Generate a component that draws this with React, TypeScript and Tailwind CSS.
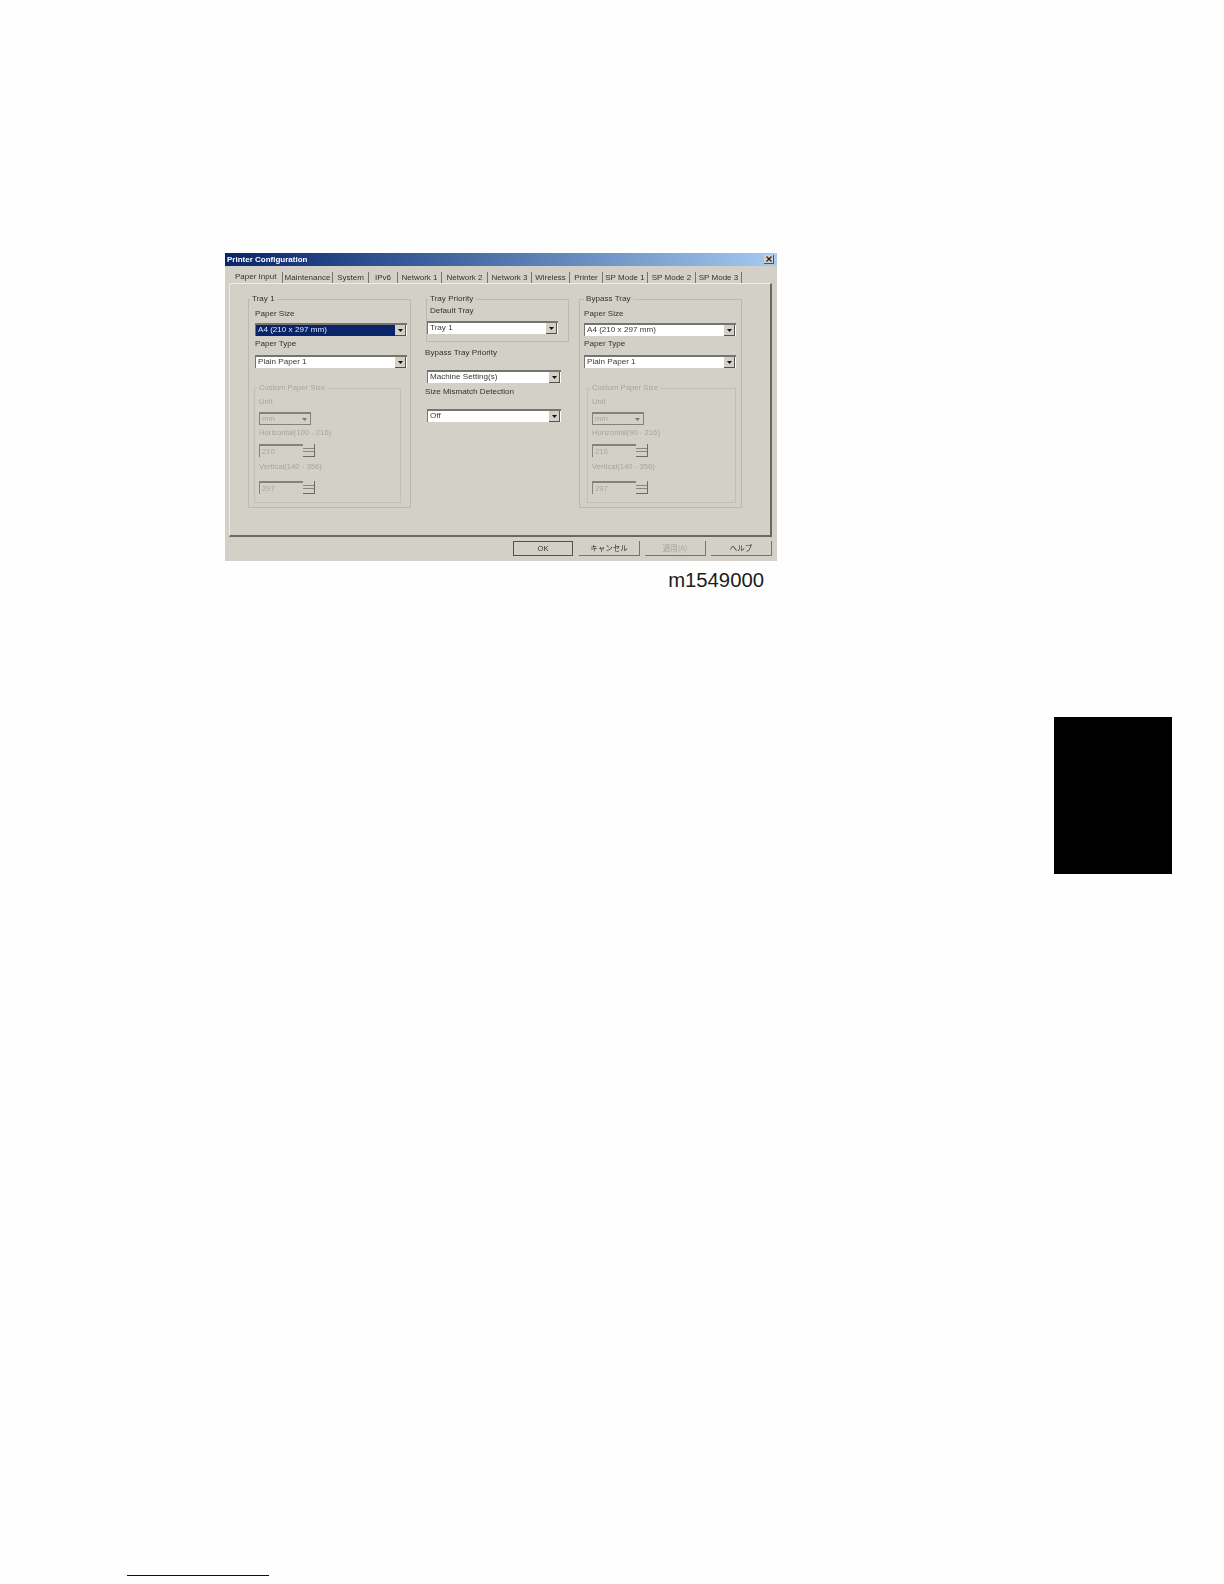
const tabs = [
  { label: 'Maintenance', w: 'w-[50px]' },
  { label: 'System', w: 'w-[36px]' },
  { label: 'IPv6', w: 'w-[29px]' },
  { label: 'Network 1', w: 'w-[44px]' },
  { label: 'Network 2', w: 'w-[46px]' },
  { label: 'Network 3', w: 'w-[44px]' },
  { label: 'Wireless', w: 'w-[38px]' },
  { label: 'Printer', w: 'w-[33px]' },
  { label: 'SP Mode 1', w: 'w-[45px]' },
  { label: 'SP Mode 2', w: 'w-[48px]' },
  { label: 'SP Mode 3', w: 'w-[46px]' },
]

function Arrow() {
  return (
    <span className="flex h-full w-[11px] shrink-0 items-center justify-center border-r border-b border-[#55524d] bg-[#d4d0c8]">
      <svg width="5" height="3" viewBox="0 0 5 3">
        <polygon points="0,0 5,0 2.5,3" fill="#111" />
      </svg>
    </span>
  )
}

function Combo({ text, className, selected }: { text: string; className: string; selected?: boolean }) {
  return (
    <div className={`flex h-[13px] items-center border-t-2 border-l border-[#77746e] bg-white pr-px ${className}`}>
      <span
        className={`flex h-full flex-1 items-center pl-[2px] leading-none ${
          selected ? 'bg-[#0a246a] text-[#e4e8f4]' : 'text-[#3a3a3a]'
        }`}
      >
        {text}
      </span>
      <Arrow />
    </div>
  )
}

function DisabledCombo({ text }: { text: string }) {
  return (
    <div className="ml-[4px] mt-[5px] flex h-[13px] w-[52px] items-center border-t-2 border-l border-r border-b border-[#85827b] pr-px text-[#a8a59e]">
      <span className="flex-1 pl-[2px] leading-none">{text}</span>
      <span className="flex h-full w-[10px] items-center justify-center bg-[#d4d0c8]">
        <svg width="5" height="3" viewBox="0 0 5 3">
          <polygon points="0,0 5,0 2.5,3" fill="#777" />
        </svg>
      </span>
    </div>
  )
}

function Spin({ text, className }: { text: string; className: string }) {
  return (
    <div className={`ml-[4px] flex h-[13px] text-[#a8a59e] ${className}`}>
      <div className="flex w-[44px] items-center border-t-2 border-l border-[#85827b] pl-[2px] leading-none">{text}</div>
      <div className="flex w-[12px] flex-col justify-center gap-[2px] border-r border-b border-[#6d6a64]">
        <div className="h-px w-full bg-[#8a8780]" />
        <div className="h-px w-full bg-[#8a8780]" />
      </div>
    </div>
  )
}

function Label({ text, className }: { text: string; className?: string }) {
  return <div className={`h-[10px] leading-[10px] whitespace-nowrap ${className ?? ''}`}>{text}</div>
}

function CustomSize({ hor, ver, className }: { hor: string; ver: string; className: string }) {
  return (
    <fieldset className={`h-[120px] border border-[#c2bfb7] text-[7.7px] ${className}`}>
      <legend className="ml-[2px] h-[10px] px-[2px] leading-[10px] text-[#a8a59e]">Custom Paper Size</legend>
      <Label text="Unit" className="ml-[4px] mt-[4px] text-[#a8a59e]" />
      <DisabledCombo text="mm" />
      <Label text={hor} className="ml-[4px] mt-[3px] text-[#a8a59e]" />
      <Spin text="210" className="mt-[6px]" />
      <Label text={ver} className="ml-[4px] mt-[5px] text-[#a8a59e]" />
      <Spin text="297" className="mt-[9px]" />
    </fieldset>
  )
}

function TrayGroup({ title, className, legendClass, hor, ver, selected, comboClass, customClass }: {
  title: string
  className: string
  legendClass: string
  hor: string
  ver: string
  selected?: boolean
  comboClass: string
  customClass: string
}) {
  return (
    <fieldset className={`h-[214px] w-[163px] shrink-0 border border-[#bcb9b1] ${className}`}>
      <legend className={`h-[10px] px-[2px] leading-[10px] ${legendClass}`}>{title}</legend>
      <Label text="Paper Size" className="mt-[5px]" />
      <Combo text="A4 (210 x 297 mm)" selected={selected} className={`mt-[4px] ${comboClass}`} />
      <Label text="Paper Type" className="mt-[3px]" />
      <Combo text="Plain Paper 1" className={`mt-[6px] ${comboClass}`} />
      <CustomSize hor={hor} ver={ver} className={`mt-[15px] ${customClass}`} />
    </fieldset>
  )
}

export default function App() {
  return (
    <div className="flex h-[1584px] w-[1224px] flex-col overflow-hidden bg-[#fefefe] font-['Liberation_Sans',sans-serif]">
      {/* Dialog */}
      <div className="ml-[225px] mt-[253px] flex h-[308px] w-[552px] flex-col bg-[#d3d0c8] text-[8.1px] text-[#33322f] blur-[0.7px]">
        <div className="flex h-[13px] items-center justify-between bg-gradient-to-r from-[#0a246a] to-[#a6caf0] pl-[2px] pr-[3px]">
          <span className="text-[8px] font-bold leading-none text-white">Printer Configuration</span>
          <span className="flex h-[9px] w-[10px] items-center justify-center border-r border-b border-[#55524d] bg-[#d4d0c8]">
            <svg width="6" height="6" viewBox="0 0 6 6">
              <path d="M0.5 0.5 L5.5 5.5 M5.5 0.5 L0.5 5.5" stroke="#222" strokeWidth="1.2" />
            </svg>
          </span>
        </div>

        <div className="flex h-[17px] items-end pl-[10px] text-[8px]">
          <div className="mb-[2px] w-[47px] leading-none whitespace-nowrap">Paper Input</div>
          {tabs.map((t) => (
            <div key={t.label} className={`flex h-[11px] items-center justify-center whitespace-nowrap border-l border-[#77746e] leading-none ${t.w}`}>
              {t.label}
            </div>
          ))}
          <div className="h-[11px] border-l border-[#77746e]" />
        </div>

        <div className="ml-[4px] flex h-[254px] w-[543px] gap-[10px] border-r-2 border-b-2 border-t border-l border-r-[#6b6863] border-b-[#6b6863] border-t-[#eeece6] border-l-[#eeece6] pl-[18px] pt-[10px]">
          <TrayGroup
            title="Tray 1"
            className="pl-[6px]"
            legendClass="ml-[-5px]"
            hor="Horizontal(100 - 216)"
            ver="Vertical(140 - 356)"
            selected
            comboClass="w-[152px]"
            customClass="ml-[-1px] w-[147px]"
          />

          <div className="ml-[5px] flex w-[143px] shrink-0 flex-col">
            <fieldset className="h-[48px] border border-[#bcb9b1]">
              <legend className="ml-px h-[10px] px-[2px] leading-[10px]">Tray Priority</legend>
              <Label text="Default Tray" className="ml-[3px] mt-[2px]" />
              <Combo text="Tray 1" className="mt-[5px] w-[131px]" />
            </fieldset>
            <Label text="Bypass Tray Priority" className="ml-[-1px] mt-[6px]" />
            <Combo text="Machine Setting(s)" className="ml-px mt-[12px] w-[134px]" />
            <Label text="Size Mismatch Detection" className="ml-[-1px] mt-[4px]" />
            <Combo text="Off" className="ml-px mt-[12px] w-[134px]" />
          </div>

          <TrayGroup
            title="Bypass Tray"
            className="pl-[4px]"
            legendClass=""
            hor="Horizontal(90 - 216)"
            ver="Vertical(140 - 356)"
            comboClass="w-[152px]"
            customClass="ml-[3px] w-[149px]"
          />
        </div>

        <div className="mt-[4px] flex justify-end gap-[5px] pr-[5px] text-[7.5px]">
          <div className="mr-px flex h-[15px] w-[60px] items-center justify-center border border-[#55524d] leading-none">OK</div>
          <div className="flex h-[15px] w-[61px] items-center justify-center border-r border-b border-[#77746e] leading-none font-['Noto_Sans_CJK_JP','Liberation_Sans',sans-serif]">キャンセル</div>
          <div className="flex h-[15px] w-[61px] items-center justify-center border-r border-b border-[#77746e] leading-none text-[#a8a59e] font-['Noto_Sans_CJK_JP','Liberation_Sans',sans-serif]">適用(A)</div>
          <div className="flex h-[15px] w-[61px] items-center justify-center border-r border-b border-[#77746e] leading-none font-['Noto_Sans_CJK_JP','Liberation_Sans',sans-serif]">ヘルプ</div>
        </div>
      </div>

      <div className="mr-[460px] mt-[8px] self-end text-[20.3px] leading-[23px] text-[#1c1c1c]">m1549000</div>

      {/* Section tab */}
      <div className="mr-[52px] mt-[125px] h-[157px] w-[118px] self-end bg-black" />

      {/* Footnote rule */}
      <div className="ml-[127px] mt-[701px] h-px w-[142px] bg-[#000080]" />
    </div>
  )
}
